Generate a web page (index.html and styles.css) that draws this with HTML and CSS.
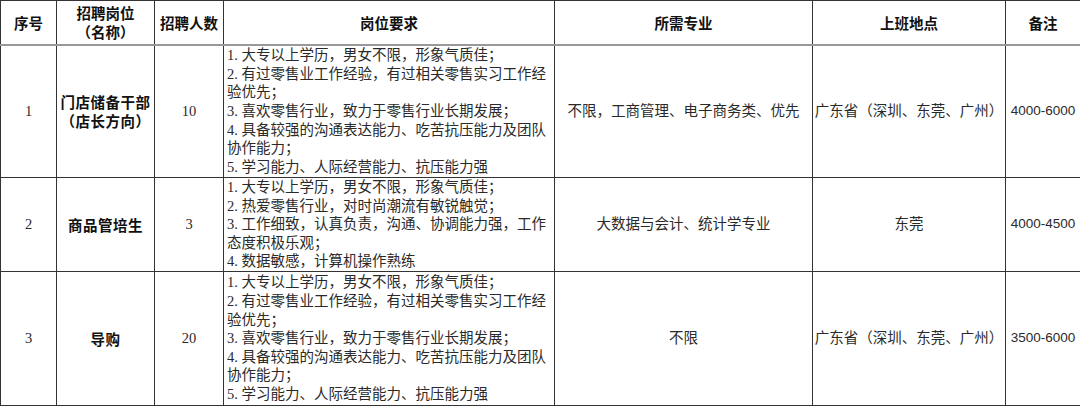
FILE: index.html
```html
<!DOCTYPE html>
<html lang="zh-CN">
<head>
<meta charset="utf-8">
<link rel="stylesheet" href="styles.css">
</head>
<body>
<table class="jobs">
  <colgroup>
    <col class="c-no"><col class="c-name"><col class="c-count"><col class="c-req"><col class="c-major"><col class="c-loc"><col class="c-note">
  </colgroup>
  <thead>
    <tr class="head">
      <th>序号</th>
      <th>招聘岗位<br>（名称）</th>
      <th>招聘人数</th>
      <th>岗位要求</th>
      <th>所需专业</th>
      <th>上班地点</th>
      <th>备注</th>
    </tr>
  </thead>
  <tbody>
    <tr class="r1">
      <td class="num">1</td>
      <td class="name">门店储备干部<br>（店长方向）</td>
      <td class="num">10</td>
      <td class="req">1. 大专以上学历，男女不限，形象气质佳；<br>2. 有过零售业工作经验，有过相关零售实习工作经验优先；<br>3. 喜欢零售行业，致力于零售行业长期发展；<br>4. 具备较强的沟通表达能力、吃苦抗压能力及团队协作能力；<br>5. 学习能力、人际经营能力、抗压能力强</td>
      <td class="mid">不限，工商管理、电子商务类、优先</td>
      <td class="mid">广东省（深圳、东莞、广州）</td>
      <td class="note">4000-6000</td>
    </tr>
    <tr class="r2">
      <td class="num">2</td>
      <td class="name">商品管培生</td>
      <td class="num">3</td>
      <td class="req">1. 大专以上学历，男女不限，形象气质佳；<br>2. 热爱零售行业，对时尚潮流有敏锐触觉；<br>3. 工作细致，认真负责，沟通、协调能力强，工作态度积极乐观；<br>4. 数据敏感，计算机操作熟练</td>
      <td class="mid">大数据与会计、统计学专业</td>
      <td class="mid">东莞</td>
      <td class="note">4000-4500</td>
    </tr>
    <tr class="r3">
      <td class="num">3</td>
      <td class="name">导购</td>
      <td class="num">20</td>
      <td class="req">1. 大专以上学历，男女不限，形象气质佳；<br>2. 有过零售业工作经验，有过相关零售实习工作经验优先；<br>3. 喜欢零售行业，致力于零售行业长期发展；<br>4. 具备较强的沟通表达能力、吃苦抗压能力及团队协作能力；<br>5. 学习能力、人际经营能力、抗压能力强</td>
      <td class="mid">不限</td>
      <td class="mid">广东省（深圳、东莞、广州）</td>
      <td class="note">3500-6000</td>
    </tr>
  </tbody>
</table>
</body>
</html>
```

FILE: styles.css
```css
html, body {
  margin: 0;
  padding: 0;
  background: #fff;
}

.jobs {
  width: 1080px;
  border-collapse: collapse;
  table-layout: fixed;
  font-family: "Liberation Serif", "Noto Sans CJK SC", serif;
  font-size: 14.5px;
  color: #2a2a2a;
}

.c-no { width: 56px; }
.c-name { width: 98px; }
.c-count { width: 69px; }
.c-req { width: 331px; }
.c-major { width: 258px; }
.c-loc { width: 193px; }
.c-note { width: 75px; }

.jobs th,
.jobs td {
  border: 1px solid #333;
  padding: 0 2px;
  vertical-align: middle;
  text-align: center;
  line-height: 18.6px;
  overflow: hidden;
}

.jobs th {
  font-family: "Noto Sans CJK SC", sans-serif;
  font-weight: 700;
  font-size: 14.5px;
  color: #111;
  line-height: 19px;
  border-bottom: 2px solid #999;
}

.head { height: 44px; }
.r1 { height: 133px; }
.r2 { height: 93px; }
.r3 { height: 134px; }

.jobs .name {
  font-family: "Noto Sans CJK SC", sans-serif;
  font-weight: 700;
  font-size: 14.5px;
  line-height: 19px;
  color: #111;
  letter-spacing: 0.5px;
}

.jobs .req {
  text-align: left;
  padding: 0 1px 0 3px;
  word-break: break-all;
}

.jobs .mid {
  padding: 0 1px;
  white-space: nowrap;
}

.jobs .note {
  font-family: "Liberation Sans", sans-serif;
  font-size: 13.5px;
  padding: 0 1px;
  white-space: nowrap;
}
```
